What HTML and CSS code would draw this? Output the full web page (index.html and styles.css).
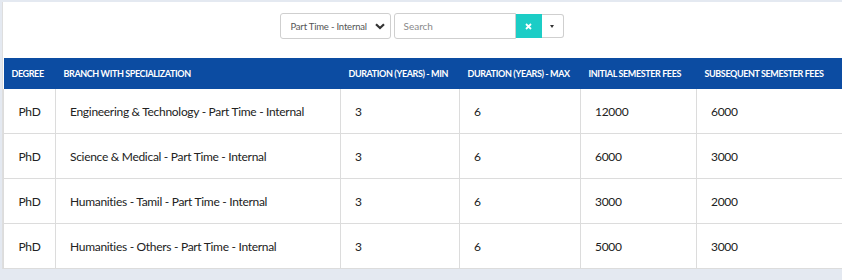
FILE: index.html
```html
<!DOCTYPE html>
<html>
<head>
<meta charset="utf-8">
<link rel="stylesheet" href="styles.css">
</head>
<body>
<div class="page">
  <div class="card">
    <div class="toolbar">
      <div class="select">
        <span>Part Time - Internal</span>
        <svg class="chev" width="10" height="7" viewBox="0 0 10 7"><path d="M1 1.2 L5 5 L9 1.2" fill="none" stroke="#333" stroke-width="2.2"/></svg>
      </div>
      <div class="search">
        <span class="ph">Search</span>
      </div>
      <div class="btn-clear">
        <svg width="7" height="7" viewBox="0 0 7 7"><path d="M1 1 L6 6 M6 1 L1 6" stroke="#fff" stroke-width="1.8"/></svg>
      </div>
      <div class="btn-drop">
        <span class="caret"></span>
      </div>
    </div>
    <table class="grid">
      <colgroup>
        <col style="width:52px"><col style="width:285px"><col style="width:119px"><col style="width:121px"><col style="width:116px"><col style="width:160px">
      </colgroup>
      <thead>
        <tr>
          <th>DEGREE</th>
          <th>BRANCH WITH SPECIALIZATION</th>
          <th>DURATION (YEARS) - MIN</th>
          <th>DURATION (YEARS) - MAX</th>
          <th>INITIAL SEMESTER FEES</th>
          <th>SUBSEQUENT SEMESTER FEES</th>
        </tr>
      </thead>
      <tbody>
        <tr><td class="c">PhD</td><td>Engineering &amp; Technology - Part Time - Internal</td><td>3</td><td>6</td><td>12000</td><td>6000</td></tr>
        <tr><td class="c">PhD</td><td>Science &amp; Medical - Part Time - Internal</td><td>3</td><td>6</td><td>6000</td><td>3000</td></tr>
        <tr><td class="c">PhD</td><td>Humanities - Tamil - Part Time - Internal</td><td>3</td><td>6</td><td>3000</td><td>2000</td></tr>
        <tr><td class="c">PhD</td><td>Humanities - Others - Part Time - Internal</td><td>3</td><td>6</td><td>5000</td><td>3000</td></tr>
      </tbody>
    </table>
  </div>
</div>
</body>
</html>
```

FILE: styles.css
```css
html, body {
  margin: 0;
  padding: 0;
  background: #e4e9f1;
  overflow: hidden;
  font-family: "Lato", "Liberation Sans", sans-serif;
}
.page {
  padding: 2px 0 0 2px;
}
.card {
  background: #fff;
  width: 840px;
  border-left: 1px solid #dedede;
}
.toolbar {
  display: flex;
  justify-content: center;
  align-items: flex-start;
  height: 56px;
  padding: 11px 3px 0 0;
  box-sizing: border-box;
}
.select {
  box-sizing: border-box;
  width: 111px;
  height: 26px;
  border: 1px solid #cfcfcf;
  border-radius: 3px;
  display: flex;
  align-items: center;
  justify-content: space-between;
  padding: 0 5px 0 10px;
  font-size: 9.5px;
  letter-spacing: -0.2px;
  white-space: nowrap;
  color: #555;
}
.chev { display: block; flex: none; }
.search {
  box-sizing: border-box;
  width: 122px;
  height: 26px;
  margin-left: 3px;
  border: 1px solid #cfcfcf;
  border-radius: 3px 0 0 3px;
  display: flex;
  align-items: center;
  padding-left: 9px;
  font-size: 10px;
  color: #8a8a8a;
}
.btn-clear {
  width: 26px;
  height: 24px;
  margin-top: 1px;
  background: #1ccdc6;
  display: flex;
  align-items: center;
  justify-content: center;
}
.btn-drop {
  box-sizing: border-box;
  width: 22px;
  height: 24px;
  margin-top: 1px;
  border: 1px solid #cfcfcf;
  border-left: none;
  border-radius: 0 3px 3px 0;
  display: flex;
  align-items: center;
  justify-content: center;
}
.caret {
  width: 0;
  height: 0;
  border-left: 2.5px solid transparent;
  border-right: 2.5px solid transparent;
  border-top: 3px solid #333;
}
.grid {
  border-collapse: collapse;
  table-layout: fixed;
  width: 853px;
}
.grid th {
  background: #0c4ca2;
  color: #fff;
  font-size: 9px;
  font-weight: 700;
  text-align: left;
  height: 31px;
  padding: 0 0 0 8px;
  white-space: nowrap;
  letter-spacing: -0.4px;
}
.grid td {
  height: 44px;
  border: 1px solid #dcdcdc;
  border-top: none;
  padding: 0 0 0 14px;
  font-size: 12px;
  letter-spacing: -0.3px;
  color: #222;
  white-space: nowrap;
}
.grid td.c {
  text-align: center;
  padding: 0;
}
```
